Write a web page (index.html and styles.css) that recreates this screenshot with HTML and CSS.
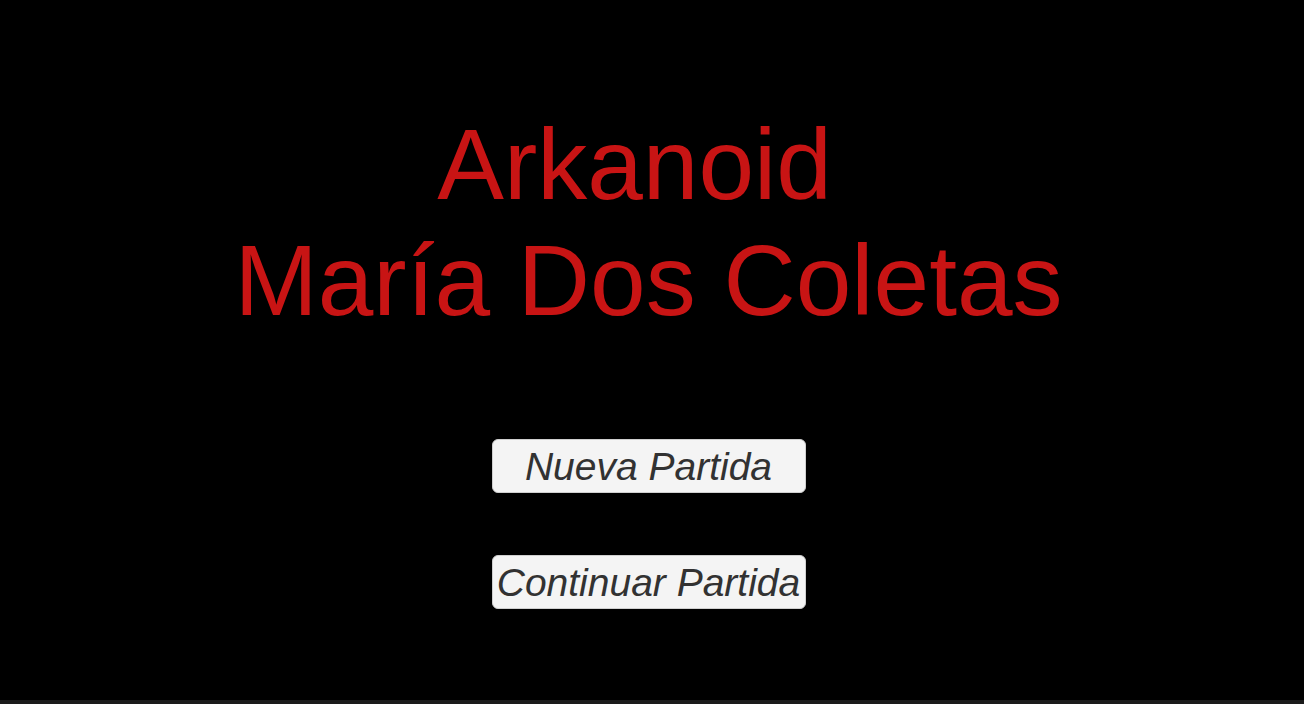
FILE: index.html
```html
<!DOCTYPE html>
<html lang="es">
<head>
<meta charset="utf-8">
<title>Arkanoid</title>
<link rel="stylesheet" href="styles.css">
</head>
<body>
<div class="screen">
  <main class="menu">
    <h1 class="title">
      <span class="title-line">Arkanoid&nbsp;</span>
      <span class="title-line">María Dos Coletas</span>
    </h1>
    <div class="buttons">
      <button class="btn btn-new">Nueva Partida</button>
      <button class="btn btn-continue">Continuar Partida</button>
    </div>
  </main>
  <div class="bottom-bar"></div>
</div>
</body>
</html>
```

FILE: styles.css
```css
html, body {
  margin: 0;
  padding: 0;
  background: #000;
}

.screen {
  height: 704px;
  display: flex;
  flex-direction: column;
  overflow: hidden;
}

.menu {
  flex: 1;
  display: flex;
  flex-direction: column;
  align-items: center;
  width: 1297px;
  padding-top: 106px;
  box-sizing: border-box;
}

.title {
  margin: 0;
  font-family: "Liberation Sans", Arial, sans-serif;
  font-weight: normal;
  font-size: 100px;
  line-height: 116px;
  color: #c81414;
  text-align: center;
}

.title-line {
  display: block;
  white-space: nowrap;
}

.buttons {
  margin-top: 101px;
  display: flex;
  flex-direction: column;
  align-items: center;
  gap: 62px;
}

.btn {
  width: 314px;
  height: 54px;
  box-sizing: border-box;
  padding: 0;
  margin: 0;
  border: 1px solid #cfcfcf;
  border-radius: 6px;
  background: #f4f4f4;
  color: #323232;
  font-family: "Liberation Sans", Arial, sans-serif;
  font-style: italic;
  font-size: 39px;
  line-height: 1;
  white-space: nowrap;
  display: flex;
  align-items: center;
  justify-content: center;
  overflow: visible;
}

.bottom-bar {
  height: 4px;
  background: #1b1b1b;
  flex-shrink: 0;
}
```
